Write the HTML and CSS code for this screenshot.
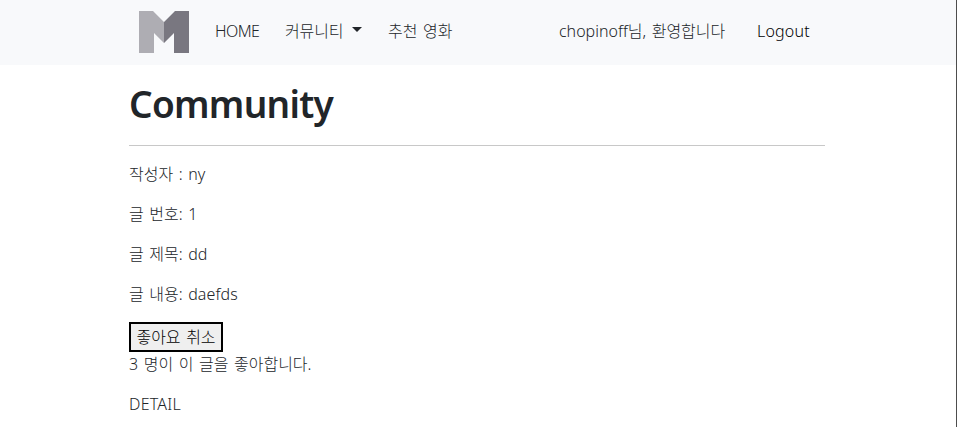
FILE: index.html
```html
<!DOCTYPE html>
<html lang="ko">
<head>
<meta charset="utf-8">
<title>Community</title>
<link rel="stylesheet" href="styles.css">
</head>
<body>
<nav class="navbar">
  <div class="container nav-row">
    <a class="brand" href="#"><svg width="50" height="42" viewBox="0 0 50 42"><path fill="#aeadb3" d="M0 0h14l11 11v21L15 22v20H0z"/><path fill="#797780" d="M50 0H36L25 11v21l10-10v20h15z"/></svg></a>
    <a class="link home" href="#">HOME</a>
    <a class="link menu" href="#">커뮤니티<span class="caret"></span></a>
    <a class="link movies" href="#">추천 영화</a>
    <span class="welcome"><span class="user">chopinoff</span>님, 환영합니다</span>
    <a class="logout" href="#">Logout</a>
  </div>
</nav>
<main class="container">
  <h1>Community</h1>
  <hr>
  <p>작성자 : ny</p>
  <p>글 번호: 1</p>
  <p>글 제목: dd</p>
  <p>글 내용: <span class="content">daefds</span></p>
  <button type="button">좋아요 취소</button>
  <p>3 명이 이 글을 좋아합니다.</p>
  <p><a class="detail" href="#">DETAIL</a></p>
</main>
</body>
</html>
```
FILE: styles.css
```css
* { box-sizing: border-box; }
body {
  margin: 0;
  height: 427px;
  overflow: hidden;
  border-right: 1px solid #4d4d4d;
  background: #fff;
  color: #212529;
  font: 300 16px/24px "Noto Sans", "Noto Sans CJK KR", sans-serif;
  word-spacing: 1.4px;
}
a { color: inherit; text-decoration: none; }
.container { width: 698px; margin-left: 129px; }
.navbar { height: 65px; background: #f8f9fb; }
.nav-row { display: flex; align-items: center; height: 62px; white-space: nowrap; }
.brand { display: flex; margin: 2px 26px 0 10px; }
.home { width: 70px; letter-spacing: -0.6px; }
.menu { width: 103px; letter-spacing: -0.1px; }
.caret {
  display: inline-block;
  margin-left: 9px;
  vertical-align: 5px;
  border: 5px solid transparent;
  border-top-color: #212529;
  border-bottom: 0;
}
.welcome { width: 167px; margin-left: auto; }
.logout { width: 52px; margin: 0 18px 0 31px; color: #000; letter-spacing: 0.2px; }
h1 {
  margin: 15px 0 0;
  font-size: 37px;
  line-height: 48px;
  font-weight: 600;
  letter-spacing: -0.7px;
}
hr { width: 696px; height: 1px; margin: 17px 0 16px; border: 0; background: #c8c8c8; }
p { margin: 0 0 16px; }
.content { letter-spacing: 0.1px; }
.detail { letter-spacing: 0.25px; }
button {
  display: block;
  width: 94px;
  height: 30px;
  padding: 0;
  border: 2px solid #000;
  background: #efefef;
  color: #000;
  font: inherit;
  word-spacing: inherit;
  white-space: nowrap;
}
```
